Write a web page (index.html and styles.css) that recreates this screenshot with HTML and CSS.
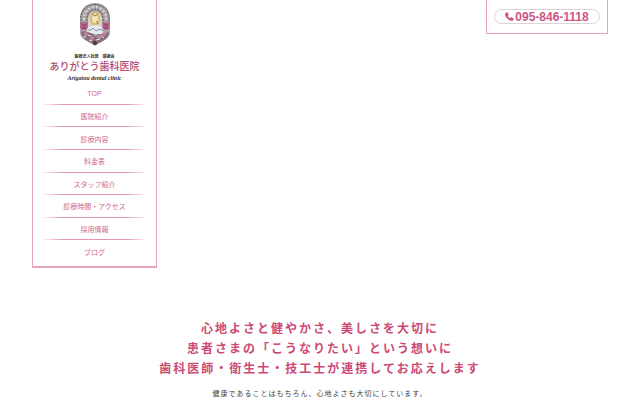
FILE: index.html
```html
<!DOCTYPE html>
<html lang="ja">
<head>
    <meta charset="UTF-8">
    <meta name="viewport" content="width=device-width, initial-scale=1.0">
    <title>ありがとう歯科医院</title>
    <link rel="stylesheet" href="styles.css">
</head>
<body>
    <header class="header">
        <div class="side">
            <a class="logo" href="#">
                <svg class="emblem" viewBox="0 0 32 44" aria-hidden="true">
                    <path d="M1 16C1-4 31-4 31 16v14c0 6-5 8-9 10l-6 4-6-4c-4-2-9-4-9-10z" fill="#aaa4a6"/>
                    <g fill="none" stroke="#5f595e">
                        <path d="M2 22v-6C2-2 30-2 30 16v6" stroke-dasharray="2 1"/>
                        <path d="M5 22v-5C5 1 27 1 27 17v5" stroke="#d9d5d6" stroke-width="2" stroke-dasharray="2 2"/>
                        <path d="M8 22v-5C8 4 24 4 24 17v5" stroke-dasharray="2 1"/>
                    </g>
                    <path d="M9 26v-8c0-11 14-11 14 0v8z" fill="#d8d2d6"/>
                    <ellipse cx="16" cy="17" rx="5" ry="7" fill="#d9bd67"/>
                    <path d="M13 16c0-6 6-6 6 0l-1 5h-4z" fill="#f3e6bd"/>
                    <path d="M13 12l3 2 3-2M17 19l2 3" stroke="#987745" fill="none"/>
                    <circle cx="5" cy="24" r="4" fill="#b8648a"/>
                    <circle cx="27" cy="24" r="4" fill="#b8648a"/>
                    <path d="M3 22l2 2 2-2M3 26h4M25 22l2 2 2-2M25 26h4" stroke="#7a3658" fill="none"/>
                    <path d="M9 25l7-2 7 2 2 7H7z" fill="#e6ebf1"/>
                    <path d="M9 28h3l2-2 3 3 4-2 3 2" stroke="#858c9c" fill="none"/>
                    <path d="M2 30c4-2 8 1 13 2s10 0 15-2c0 5-4 8-8 10l-6 3-6-3c-4-2-8-5-8-10z" fill="#85707a"/>
                    <g fill="#c7819b">
                        <circle cx="7" cy="32" r="2"/>
                        <circle cx="13" cy="36" r="2"/>
                        <circle cx="20" cy="35" r="2"/>
                        <circle cx="25" cy="32" r="2"/>
                    </g>
                    <path d="M4 35h3M9 33l3 1M15 33h3M22 34l3 2M10 38l3 1M17 38l4-1" stroke="#ece3e6" fill="none"/>
                    <circle cx="16" cy="41" r="2" fill="#443940"/>
                </svg>
                <span class="corp">医療法人社団　感謝会</span>
                <span class="name">ありがとう歯科医院</span>
                <span class="roman">Arigatou dental clinic</span>
            </a>
            <nav class="menu">
                <a href="#">TOP</a>
                <a href="#">医院紹介</a>
                <a href="#">診療内容</a>
                <a href="#">料金表</a>
                <a href="#">スタッフ紹介</a>
                <a href="#">診療時間・アクセス</a>
                <a href="#">採用情報</a>
                <a href="#">ブログ</a>
            </nav>
        </div>
        <div class="contact">
            <a class="tel" href="tel:0958461118">
                <svg class="phone" viewBox="0 0 16 16" aria-hidden="true">
                    <path d="M1 2l3-2 3 5-2 2c1 2 2 3 4 4l2-2 5 3-2 3c-1 1-3 1-5 0C4 13 1 9 0 4c0-1 0-1 1-2z"/>
                </svg>
                095-846-1118
            </a>
        </div>
    </header>
    <main class="intro">
        <h1>心地よさと健やかさ、美しさを大切に<br>患者さまの「こうなりたい」という想いに<br>歯科医師・衛生士・技工士が連携してお応えします</h1>
        <p>健康であることはもちろん、心地よさも大切にしています。</p>
    </main>
</body>
</html>
```
FILE: styles.css
```css
* {
    box-sizing: border-box;
}

body {
    margin: 0;
    background: #fff;
    color: #444;
    font-family: "Liberation Sans", "Noto Sans CJK JP", sans-serif;
}

a {
    color: inherit;
    text-decoration: none;
}

.header {
    display: flex;
    justify-content: space-between;
    align-items: flex-start;
    padding: 0 32px;
}

.side {
    width: 125px;
    padding: 2px 8px 3px;
    border: 1px solid #e8a5b9;
    border-top: 0;
    border-bottom-width: 2px;
}

.logo {
    display: flex;
    flex-direction: column;
    align-items: center;
    white-space: nowrap;
}

.emblem {
    width: 32px;
    height: 44px;
}

.corp {
    margin-top: 8px;
    color: #332a2a;
    font-size: 4px;
    font-weight: bold;
    line-height: 6px;
}

.name {
    color: #b04a72;
    font-size: 10px;
    font-weight: 500;
    line-height: 14px;
}

.roman {
    color: #332a2a;
    font-family: "Liberation Serif", serif;
    font-size: 6px;
    font-style: italic;
    font-weight: bold;
    line-height: 8px;
}

.menu {
    display: grid;
    grid-auto-rows: 1fr;
    height: 181px;
}

.menu a {
    display: flex;
    align-items: center;
    justify-content: center;
    color: #d0668a;
    font-size: 7px;
    background: linear-gradient(to right, transparent, #e595ad 20%, #e595ad 80%, transparent) bottom / 100% 1px no-repeat;
}

.menu a:last-child {
    background: none;
}

.contact {
    width: 122px;
    padding: 9px 7px;
    border: 1px solid #e8a5b9;
    border-top: 0;
}

.tel {
    display: flex;
    align-items: center;
    justify-content: center;
    gap: 1px;
    height: 15px;
    border: 1px solid #ddd3d8;
    border-radius: 8px;
    color: #cc5680;
    font-size: 12px;
    font-weight: bold;
}

.phone {
    width: 9px;
    height: 9px;
    fill: #cc5680;
}

.intro {
    margin-top: 51px;
    text-align: center;
}

.intro h1 {
    margin: 0;
    color: #cc4a74;
    font-size: 12px;
    font-weight: bold;
    letter-spacing: 2px;
    line-height: 20px;
}

.intro p {
    margin: 8px 0 0;
    font-size: 7px;
    letter-spacing: 1px;
    line-height: 14px;
}
```
